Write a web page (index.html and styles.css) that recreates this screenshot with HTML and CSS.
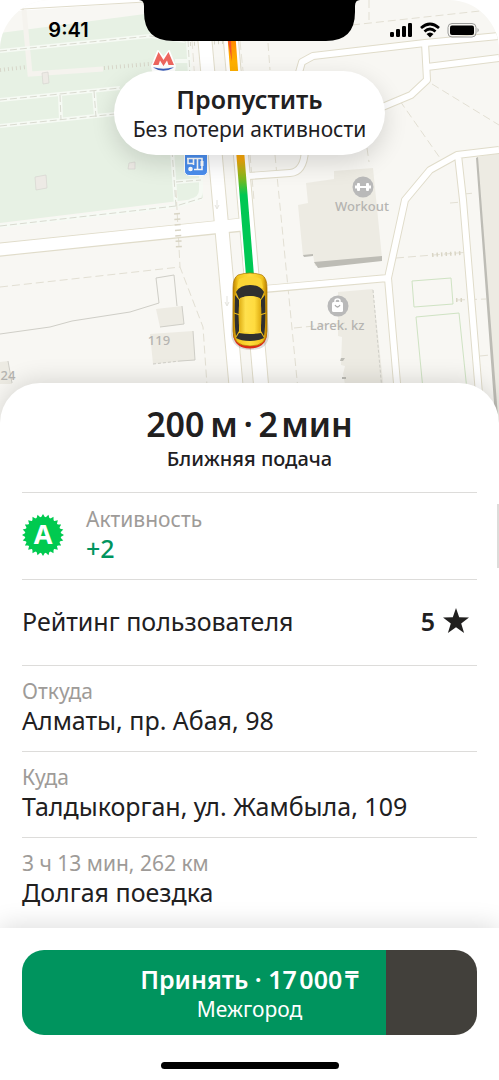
FILE: index.html
```html
<!DOCTYPE html>
<html lang="ru">
<head>
<meta charset="utf-8">
<meta name="viewport" content="width=device-width, initial-scale=1">
<title>Новый заказ</title>
<link rel="stylesheet" href="styles.css">
</head>
<body>
<main class="screen">
  <header class="top">
    <svg class="map" viewBox="0 0 499 430" preserveAspectRatio="xMidYMin slice" role="img" aria-label="Карта">
      <defs>
        <linearGradient id="route" gradientUnits="userSpaceOnUse" x1="232" y1="41" x2="238" y2="205">
          <stop offset="0" stop-color="#ff8a00"/><stop offset=".12" stop-color="#ffb000"/><stop offset=".72" stop-color="#f5a60a"/><stop offset=".84" stop-color="#7fb81e"/><stop offset=".94" stop-color="#00c853"/>
        </linearGradient>
        <linearGradient id="body" x1="0" x2="1" y1="0" y2="0">
          <stop offset="0" stop-color="#bd8300"/><stop offset=".14" stop-color="#f2c41f"/><stop offset=".5" stop-color="#ffdd3c"/><stop offset=".86" stop-color="#f2c41f"/><stop offset="1" stop-color="#b97f00"/>
        </linearGradient>
        <linearGradient id="roof" x1="0" x2="1" y1="0" y2="0">
          <stop offset="0" stop-color="#dca90d"/><stop offset=".3" stop-color="#ffe04d"/><stop offset=".7" stop-color="#ffdc3f"/><stop offset="1" stop-color="#dca90d"/>
        </linearGradient>
      </defs>
      <rect width="499" height="430" fill="#f8f7f3"/>
      <path d="M0 33L145 14L187 10L189 75L203 198L0 223Z" fill="#e7f1e4"/>
      <path d="M0 0H150V2L0 12Z" fill="#fff"/>
      <path d="M0 12L23 9L145 2M23 9L24 24" fill="none" stroke="#e0dccb"/>
      <path d="M24 10L30 74L103 69" fill="none" stroke="#f5f3ee" stroke-width="5"/>
      <g fill="none" stroke="#f6faf4" stroke-width="4">
        <path d="M0 51L150 36L185 41M0 100L120 88M0 126L115 114M60 95L61 120M94 91L96 117M188 40L190 76M172 150L176 206M0 226L176 206L202 198M176 182L201 180M201 155V190Q201 199 190 201M175 61H189"/>
      </g>
      <g fill="none" stroke="#d9dad0" stroke-dasharray="7 3">
        <path d="M0 51L150 36L185 41M0 100L120 88M0 126L115 114M60 95L61 120M94 91L96 117M188 40L190 76M172 150L176 206M0 226L176 206L202 198M176 182L201 180"/>
      </g>
      <g fill="none" stroke="#d7d6c9" stroke-width="4" stroke-dasharray="1 3">
        <path d="M0 70L27 67M104 68L160 63M190 44L224 42"/>
      </g>
      <g fill="#edeae5" stroke="#d4d1cc" stroke-width=".6">
        <path d="M42 73L48 72L49 83L43 84ZM129 163L135 162V169L128 169ZM35 177L46 175L47 188L36 190Z"/>
      </g>

      <g fill="#edebe3">
        <path d="M156 309L182 306L184 324L160 327ZM150 334L193 331L195 360L153 364ZM0 362L8 361L12 384H0Z"/>
        <path d="M306 183L334 179V171L373 168L382 258L315 266L313 255L303 256L298 205L308 203Z"/>
        <path d="M338 292L373 289L385 400H348L343 374L345 366L341 365L342 337L338 336Z"/>
        <path d="M477 157L499 153V430H498Z"/>
      </g>
      <path d="M314 262L382 256V261L318 268ZM303 255L313 254V256L304 257ZM341 358H345L343 361H340ZM342 377H346V379H342ZM476 158L478 157L499 430H496Z" fill="#bdbcb5"/>
      <g fill="none" stroke="#cfcec7">
        <path d="M0 334L50 327L72 321L130 312L159 303L156 278L174 275L177 306M182 306L184 324L160 327M193 331L195 360L180 361M8 361L12 383"/>
        <path d="M153 364L180 361M373 290L382 390" stroke-dasharray="3 2"/>
      </g>
      <g fill="none" stroke="#e2dfd3" stroke-dasharray="8 4">
        <path d="M0 287L180 267L203 327L208 400M176 190L180 267M369 0V20M352 25L480 11M268 43L270 70M400 101L440 158M432 84L499 125M367 148L369 162M250 155L254 200M275 155L299 400M294 328L345 323M396 258L470 252M457 300L486 299M480 356L490 355M450 203L462 202M464 194L475 193"/>
      </g>
      <g fill="none" stroke="#cfe3c3">
        <path d="M412 281L451 278L453 304L414 307ZM416 317L459 313L468 400H424Z"/>
      </g>

      <g fill="none" stroke="#e0dcca" stroke-linejoin="round">
        <g stroke-width="8">
          <path d="M298 76L302 62L313 56L425 43L499 36M425 43L427 80L411 95L380 108M427 67L499 58M499 150L457 155L430 170L405 200L388 278L401 430M458 155L463 200L482 430M266 289L388 278M250 176L290 173Q304 172 305 150"/>
        </g>
        <path stroke-width="14" d="M-4 250L250 224"/>
        <path stroke-width="15" d="M204 30L240 430"/>
        <path stroke-width="16" d="M230 30L265 430"/>
      </g>
      <g fill="none" stroke="#fff" stroke-linejoin="round">
        <g stroke-width="6">
          <path d="M298 76L302 62L313 56L425 43L499 36M425 43L427 80L411 95L380 108M427 67L499 58M499 150L457 155L430 170L405 200L388 278L401 430M458 155L463 200L482 430M262 289L388 278M248 176L290 173Q304 172 305 150"/>
        </g>
        <path stroke-width="12" d="M-4 250L246 224"/>
        <path stroke-width="13" d="M204 30L240 430"/>
        <path stroke-width="14" d="M230 30L265 430"/>
      </g>
      <g fill="none" stroke="#d9d5c5">
        <path d="M177 213L179 249" stroke-width="6" stroke-dasharray="1.500 4"/>
        <path d="M432 255L462 253M456 300L462 300" stroke-width="4" stroke-dasharray="1.500 3"/>
      </g>
      <path d="M192 40L200 150M240 41L248 120" stroke="#e6e3d8" stroke-dasharray="9 4"/>
      <path d="M217 200V208M215 205L217 209L219 205M227 296V305M225 302L227 306L229 302" fill="none" stroke="#e4e3dd"/>
      <path d="M231 30L240 150L250 276" fill="none" stroke="#fff" stroke-width="11"/>
      <path d="M231 30L240 150L250 276" fill="none" stroke="url(#route)" stroke-width="8"/>
      <path d="M228 41L231 41L232 62Z" fill="#f2542d"/>

      <g class="place">
        <circle cx="363" cy="187" r="10.500" fill="#b9b9b9"/>
        <path d="M359 187H367" stroke="#fff" stroke-width="2"/>
        <rect x="357" y="183" width="3" height="8" rx="1" fill="#fff"/><rect x="366" y="183" width="3" height="8" rx="1" fill="#fff"/>
        <path d="M355 187H358M368 187H371" stroke="#fff" stroke-width="3"/>
        <text x="362" y="211">Workout</text>
        <circle cx="338" cy="306" r="10.500" fill="#b9b9b9"/>
        <rect x="332" y="302" width="11" height="10" rx="1.500" fill="#fff"/>
        <path d="M335 303V301Q335 299 337.500 299Q340 299 340 301V303" fill="none" stroke="#fff" stroke-width="1.500"/>
        <path d="M335 305Q337.500 309 340 305" fill="none" stroke="#aaa" stroke-width="1.300"/>
        <text x="337" y="330">Larek. kz</text>
        <text x="159" y="345">119</text>
        <text x="8" y="380">24</text>
      </g>

      <path d="M152 66L158 51L163.500 58L169 51L175 66L174 71H153Z" fill="#fff" stroke="#fff" stroke-width="2" stroke-linejoin="round"/>
      <path d="M153 65L158.500 52L163.500 60L168.500 52L174 65H168.500L167 60.500L163.500 66L160 60.500L158.500 65Z" fill="#ee665f"/>
      <path d="M153 67.500H174Q163 74 153 67.500Z" fill="#3a5dbb"/>
      <path d="M153 66.500H174Q163 71 153 66.500Z" fill="#fff"/>

      <rect x="184.500" y="145" width="23" height="30.500" rx="4.500" fill="#4b8eee" stroke="#fff"/>
      <g fill="none" stroke="#fff" stroke-width="1.600">
        <path d="M187 158.500H202V169.500H194M188 158.500V163.500H194M193.500 158.500V165M197.500 158.500V169.500"/>
        <circle cx="190.500" cy="169" r="1.500" fill="#fff"/>
        <path d="M202 161V166" stroke-width="3"/>
      </g>

      <path d="M234 279Q249 268 265 279L269 335Q268 350 251 350Q233 350 231 335Z" fill="#000" opacity=".13"/>
      <path d="M233 334Q234 348 250 348.500Q266 348 267 334Z" fill="#dd2c18"/>
      <path d="M238 275Q250 271 262 275Q267 278 267 288V331Q267 346 250 346Q233 346 233 331V288Q233 278 238 275Z" fill="url(#body)" stroke="#ad7600" stroke-width=".7"/>
      <path d="M239 279Q250 274 261 279L263 288H237Z" fill="#fbd535"/>
      <path d="M236 292Q240 285 250 285Q260 285 264 292L261 299Q250 293 239 299Z" fill="#30302f"/>
      <path d="M235 295L239 300V331L236 336Q234 325 235 295ZM265 295L261 300V331L264 336Q266 325 265 295Z" fill="#30302f"/>
      <path d="M240 298Q250 294 260 298Q263 316 260 332H240Q237 316 240 298Z" fill="url(#roof)"/>
      <path d="M239 333Q250 335 261 333L264 338Q259 341 250 341Q241 341 236 338Z" fill="#30302f"/>
      <path d="M234 313L240 315M266 313L260 315" stroke="#e7b719" stroke-width="1.200"/>
    </svg>

    <div class="status">
      <time class="clock">9:41</time>
      <svg class="notch" viewBox="0 0 221 41" aria-hidden="true"><path d="M0 0H221Q216 0 216 6V12Q216 41 187 41H34Q5 41 5 12V6Q5 0 0 0Z"/></svg>
      <div class="indicators">
        <svg width="24" height="16" viewBox="0 0 24 16" role="img" aria-label="Сеть"><rect x="1" y="10" width="4" height="5" rx="1.200"/><rect x="7" y="7" width="4" height="8" rx="1.200"/><rect x="13" y="4" width="4" height="11" rx="1.200"/><rect x="19" y="1" width="4" height="14" rx="1.200"/></svg>
        <svg width="22" height="16" viewBox="0 0 22 16" role="img" aria-label="Wi-Fi"><g fill="none" stroke="#000" stroke-width="2.700"><path d="M2 6Q11 -2 20 6"/><path d="M5.500 9.500Q11 4.500 16.500 9.500"/></g><path d="M7.500 12Q11 9 14.500 12L11 15.500Z"/></svg>
        <svg width="33" height="16" viewBox="0 0 33 16" role="img" aria-label="Батарея"><rect x="1" y="1.500" width="28" height="13.500" rx="4" fill="none" stroke="#9c9c9a"/><rect x="3" y="3.500" width="24" height="9.500" rx="2"/><path d="M30.500 6Q33 8 30.500 10.500Z" fill="#9c9c9a"/></svg>
      </div>
    </div>

    <button class="skip" type="button">
      <span class="action">Пропустить</span>
      <span class="caption">Без потери активности</span>
    </button>
  </header>

  <section class="sheet">
    <div class="summary">
      <h1 class="distance">200&#8201;м&#8201;·&#8201;2&#8202;мин</h1>
      <p class="pickup">Ближняя подача</p>
    </div>
    <div class="row activity">
      <svg class="badge" viewBox="0 0 42 42" aria-hidden="true">
        <g fill="#00ca50"><circle cx="21" cy="21" r="18"/><path id="ray" d="M18 5L21 0L24 5V37L21 42L18 37ZM5 18L0 21L5 24H37L42 21L37 18Z"/>
        <use href="#ray" transform="rotate(15 21 21)"/><use href="#ray" transform="rotate(30 21 21)"/><use href="#ray" transform="rotate(45 21 21)"/><use href="#ray" transform="rotate(60 21 21)"/><use href="#ray" transform="rotate(75 21 21)"/></g>
        <text x="21" y="30">А</text>
      </svg>
      <div>
        <p class="label">Активность</p>
        <p class="value bonus">+2</p>
      </div>
    </div>
    <div class="row rating">
      <span class="value">Рейтинг пользователя</span>
      <span class="score">5
        <svg width="26" height="26" viewBox="0 0 26 26" aria-hidden="true"><path d="M13 0L16.200 9.300L26 9.500L18.200 15.500L21.100 25L13 19.300L4.900 25L7.800 15.500L0 9.500L9.800 9.300Z" fill="#21201f"/></svg>
      </span>
    </div>
    <div class="row">
      <p class="label">Откуда</p>
      <p class="value">Алматы, пр. Абая, 98</p>
    </div>
    <div class="row">
      <p class="label">Куда</p>
      <p class="value">Талдыкорган, ул. Жамбыла, 109</p>
    </div>
    <div class="row last">
      <p class="label">3 ч 13 мин, 262 км</p>
      <p class="value">Долгая поездка</p>
    </div>
    <span class="scrollbar"></span>
  </section>

  <footer class="bottom">
    <button class="accept" type="button">
      <span class="action">Принять · 17&#8202;000&#8202;₸</span>
      <span class="caption">Межгород</span>
    </button>
    <span class="home"></span>
  </footer>
</main>
</body>
</html>
```
FILE: styles.css
```css
* {
  box-sizing: border-box;
}

body {
  margin: 0;
  background: #fff;
  color: #21201f;
  font-family: "Noto Sans", "Open Sans", sans-serif;
}

h1,
p {
  margin: 0;
}

button {
  border: 0;
  font-family: inherit;
  cursor: pointer;
}

.screen {
  display: flex;
  flex-direction: column;
  min-height: 100vh;
}

.top {
  position: relative;
  flex: 1 0 auto;
  display: flex;
  flex-direction: column;
  align-items: center;
  gap: 28px;
  min-height: 300px;
}

.map {
  position: absolute;
  top: 0;
  left: 0;
  width: 100%;
  height: calc(100% + 40px);
  border-radius: 50px 50px 0 0;
}

.place text {
  fill: #b5b4b1;
  font-size: 13px;
  font-weight: 500;
  text-anchor: middle;
}

.status {
  position: relative;
  display: grid;
  grid-template-columns: 1fr 221px 1fr;
  align-self: stretch;
}

.clock {
  justify-self: center;
  padding: 17px 2px 0 0;
  color: #000;
  font-family: Inter, sans-serif;
  font-size: 20px;
  font-weight: 600;
  line-height: 26px;
}

.notch {
  width: 100%;
  height: 41px;
}

.indicators {
  display: flex;
  justify-content: flex-end;
  gap: 6px;
  padding: 22px 19px 0 0;
}

.skip {
  position: relative;
  padding: 11px 19px 13px;
  border-radius: 42px;
  background: #fff;
  color: #21201f;
  box-shadow: 0 8px 24px rgba(0, 0, 0, 0.14);
}

.action,
.caption {
  display: block;
}

.action {
  font-size: 25px;
  font-weight: 600;
  line-height: 34px;
}

.caption {
  font-size: 21px;
  line-height: 26px;
}

.sheet {
  position: relative;
  padding: 0 22px;
  border-radius: 40px 40px 0 0;
  background: #fff;
  box-shadow: 0 -2px 24px rgba(0, 0, 0, 0.14);
}

.summary {
  padding: 20px 0 19px;
  text-align: center;
}

.distance {
  font-size: 34px;
  font-weight: 600;
  line-height: 42px;
}

.pickup {
  font-size: 20px;
  font-weight: 500;
  line-height: 28px;
}

.row {
  min-height: 86px;
  padding: 12px 0 15px;
  border-top: 1px solid #dddcda;
}

.label {
  color: #9e9b98;
  font-size: 21px;
  line-height: 26px;
}

.value {
  font-size: 25px;
  line-height: 32px;
}

.activity {
  display: flex;
  align-items: center;
  gap: 22px;
  min-height: 87px;
}

.badge {
  width: 42px;
  height: 42px;
}

.badge text {
  fill: #fff;
  font-size: 27px;
  font-weight: 700;
  text-anchor: middle;
}

.bonus {
  color: #00945e;
  font-weight: 500;
}

.rating,
.score {
  display: flex;
  align-items: center;
}

.rating {
  justify-content: space-between;
}

.score {
  gap: 8px;
  padding-right: 8px;
  font-size: 25px;
  font-weight: 600;
  line-height: 32px;
}

.last {
  padding-bottom: 20px;
}

.scrollbar {
  position: absolute;
  top: 121px;
  right: 0;
  width: 2px;
  height: 64px;
  background: #dddcda;
}

.bottom {
  position: relative;
  display: flex;
  flex-direction: column;
  align-items: center;
  gap: 27px;
  padding: 22px 22px 11px;
  background: #fff;
  box-shadow: 0 -2px 24px rgba(0, 0, 0, 0.14);
}

.accept {
  align-self: stretch;
  padding: 12px 22px 13px;
  border-radius: 22px;
  background: linear-gradient(90deg, #00945e 80%, #42403b 80%);
  color: #fff;
}

.home {
  width: 178px;
  height: 7px;
  border-radius: 4px;
  background: #000;
}
```
